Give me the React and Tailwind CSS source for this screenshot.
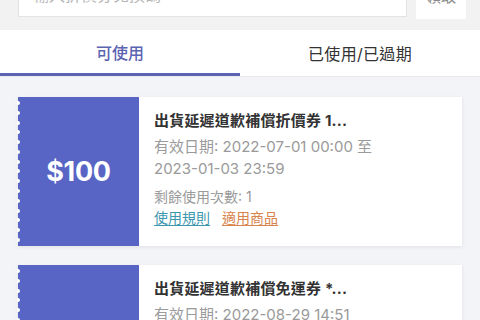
import React from "react"

const coupons = [
  {
    id: 1,
    amount: "$100",
    title: "出貨延遲道歉補償折價券 1...",
    date1: "有效日期: 2022-07-01 00:00 至",
    date2: "2023-01-03 23:59",
    left: "剩餘使用次數: 1",
  },
  {
    id: 2,
    amount: "",
    title: "出貨延遲道歉補償免運券 *...",
    date1: "有效日期: 2022-08-29 14:51",
    date2: "2023-01-03 23:59",
    left: "剩餘使用次數: 1",
  },
]

function Coupon({ c }) {
  return (
    <div className="flex bg-white shadow-[0_1px_4px_rgba(0,0,0,0.08)] h-[149px] shrink-0">
      <div className="relative w-[121px] bg-[#5865c4] flex items-center justify-center">
        <div className="absolute top-[4px] bottom-[4px] left-[-1px] flex flex-col justify-between">
          {Array.from({ length: 15 }).map((_, i) => (
            <span key={i} className="block w-[3px] h-[4px] rounded-r-full bg-white"></span>
          ))}
        </div>
        <span className="text-white font-bold text-[27px] tracking-[-0.3px] pt-[2px]">{c.amount}</span>
      </div>
      <div className="flex-1 pl-[15px] pt-[13px]">
        <p className="text-[15px] font-bold text-[#333] leading-[22px] tracking-[0.2px]">{c.title}</p>
        <p className="mt-[4px] text-[15px] text-[#9a9a9a] leading-[22px]">{c.date1}</p>
        <p className="text-[15px] text-[#9a9a9a] leading-[22px]">{c.date2}</p>
        <p className="mt-[6px] text-[14px] text-[#9a9a9a] leading-[22px]">{c.left}</p>
        <div className="flex gap-[12px] text-[14px] leading-[20px]">
          <span className="text-[#3d97ad] underline underline-offset-2">使用規則</span>
          <span className="text-[#d8834c] underline underline-offset-2">適用商品</span>
        </div>
      </div>
    </div>
  )
}

function App() {
  return (
    <div
      className="w-[480px] h-[320px] overflow-hidden bg-[#f3f4f8] flex flex-col"
      style={{ fontFamily: '"Inter", "Noto Sans CJK TC", sans-serif' }}
    >
      {/* search bar (scrolled off the top) */}
      <div className="h-[30px] shrink-0 bg-[#f2f2f2] overflow-hidden">
        <div className="flex gap-[9px] pl-[18px] pr-[14px] -mt-[23px]">
          <div className="flex-1 h-[40px] bg-white border border-[#e3e3e3] flex items-end pl-[14px] pb-[9px]">
            <span className="text-[16px] text-[#b5b5b5]">輸入折價券兌換碼</span>
          </div>
          <div className="w-[50px] h-[42px] bg-white flex items-end justify-center pb-[11px]">
            <span className="text-[15px] text-[#8a8a8a]">領取</span>
          </div>
        </div>
      </div>

      {/* tabs */}
      <div className="h-[47px] shrink-0 bg-white flex border-b border-[#e8e8ee]">
        <div className="w-1/2 flex items-center justify-center border-b-[3px] border-[#5b63b3] pt-[2px]">
          <span className="text-[16px] font-medium text-[#5b63b3]">可使用</span>
        </div>
        <div className="w-1/2 flex items-center justify-center pt-[1px]">
          <span className="text-[16px] text-[#333] tracking-[0.3px]">已使用/已過期</span>
        </div>
      </div>

      {/* list */}
      <div className="flex flex-col gap-[19px] pl-[18px] pr-[18px] pt-[20px]">
        {coupons.map(c => (
          <Coupon key={c.id} c={c} />
        ))}
      </div>
    </div>
  )
}

export default App
